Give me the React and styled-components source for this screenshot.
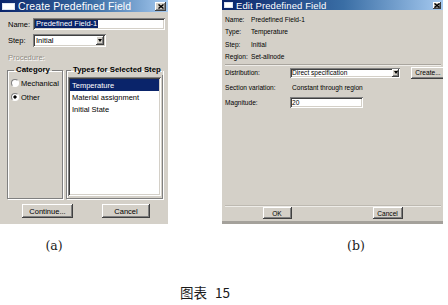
import React from 'react';
import styled, { createGlobalStyle, css } from 'styled-components';

const GlobalStyle = createGlobalStyle`
  html, body {
    margin: 0;
    padding: 0;
    background: #ffffff;
  }
  body {
    width: 448px;
    height: 305px;
    overflow: hidden;
    font-family: "Liberation Sans", Arial, sans-serif;
  }
`;

const raised = css`
  background: #d4d0c8;
  box-shadow: inset -1px -1px #404040, inset 1px 1px #ffffff, inset -2px -2px #808080;
`;

const sunken = css`
  background: #ffffff;
  box-shadow: inset 1px 1px #808080, inset -1px -1px #ffffff, inset 2px 2px #404040,
    inset -2px -2px #d4d0c8;
`;

const Page = styled.div`
  display: flex;
  flex-direction: column;
`;

const DialogRow = styled.div`
  display: flex;
  align-items: flex-start;
  gap: 54px;
`;

const Dialog = styled.div`
  width: ${(p) => p.$w}px;
  height: 224px;
  box-sizing: border-box;
  background: #d4d0c8;
  display: flex;
  flex-direction: column;
  overflow: hidden;
  color: #000;
  border-bottom: ${(p) => (p.$bar ? '3px solid #a4a19b' : 'none')};
`;

const TitleBar = styled.div`
  height: ${(p) => p.$h}px;
  flex: none;
  display: flex;
  align-items: center;
  gap: 3px;
  padding: 0 2px;
  background: linear-gradient(to right, #0a246a 0%, #3a6ea5 55%, #a6caf0 100%);
  color: #ffffff;
  font-size: ${(p) => p.$fs}px;
  white-space: nowrap;
`;

const WinIcon = styled.span`
  width: ${(p) => p.$w}px;
  height: ${(p) => p.$h}px;
  flex: none;
  background: #ffffff;
  box-shadow: inset 0 0 0 1px #dfe6f2;
`;

const TitleText = styled.span`
  flex: 1;
  letter-spacing: 0.1px;
`;

const CloseBox = styled.span`
  ${raised};
  width: ${(p) => p.$w}px;
  height: ${(p) => p.$h}px;
  flex: none;
  display: flex;
  align-items: center;
  justify-content: center;
`;

const CloseGlyph = () => (
  <svg width="6" height="5" viewBox="0 0 6 5">
    <path d="M0.5 0.5 L5.5 4.5 M5.5 0.5 L0.5 4.5" stroke="#000" strokeWidth="1.4" />
  </svg>
);

/* left dialog */

const LeftBody = styled.div`
  display: flex;
  flex-direction: column;
  padding: 0 3px 0 7px;
  font-size: 7.5px;
`;

const FieldRow = styled.div`
  display: flex;
  align-items: center;
  height: ${(p) => p.$h}px;
  margin-top: ${(p) => p.$mt}px;
`;

const FieldLabel = styled.span`
  width: 26px;
  flex: none;
  padding-left: 1px;
  box-sizing: border-box;
`;

const TextBox = styled.div`
  ${sunken};
  width: ${(p) => p.$w}px;
  height: 100%;
  box-sizing: border-box;
  display: flex;
  align-items: center;
  padding: 0 2px;
  white-space: nowrap;
`;

const Highlight = styled.span`
  background: #0a246a;
  color: #ffffff;
  padding: 0 1px;
  line-height: 8px;
`;

const Combo = styled(TextBox)`
  justify-content: space-between;
  padding: 2px 2px 2px 3px;
`;

const ArrowButton = styled.span`
  ${raised};
  width: ${(p) => p.$w || 8}px;
  height: 100%;
  flex: none;
  display: flex;
  align-items: center;
  justify-content: center;
  &::after {
    content: '';
    border-left: 2.5px solid transparent;
    border-right: 2.5px solid transparent;
    border-top: 3px solid #000;
  }
`;

const DisabledText = styled.div`
  height: 12px;
  margin-top: 4px;
  display: flex;
  align-items: center;
  padding-left: 1px;
  color: #908c84;
  text-shadow: 1px 1px 0 #ffffff;
`;

const Groups = styled.div`
  display: flex;
  gap: 3px;
  margin-top: 2px;
`;

const Group = styled.fieldset`
  width: ${(p) => p.$w}px;
  height: 134px;
  box-sizing: border-box;
  margin: 0;
  padding: ${(p) => p.$pad};
  min-width: 0;
  border: 1px solid #808080;
  box-shadow: inset 1px 1px #ffffff, 1px 1px #ffffff;
  display: flex;
  flex-direction: column;
`;

const Legend = styled.legend`
  font-weight: bold;
  font-size: 7.8px;
  line-height: 10px;
  padding: 0 2px;
  margin-left: 3px;
  white-space: nowrap;
`;

const RadioRow = styled.label`
  height: 14px;
  display: flex;
  align-items: center;
  gap: 2px;
`;

const RadioDot = styled.span`
  width: 8px;
  height: 8px;
  box-sizing: border-box;
  border-radius: 50%;
  border: 1px solid;
  border-color: #808080 #ffffff #ffffff #808080;
  background: ${(p) =>
    p.$on ? 'radial-gradient(circle, #000 0 1.4px, #fff 1.8px)' : '#ffffff'};
  flex: none;
`;

const ListBox = styled.div`
  ${sunken};
  flex: 1;
  margin-bottom: 1px;
  padding: 2px 2px;
  display: flex;
  flex-direction: column;
`;

const ListItem = styled.div`
  height: 12px;
  display: flex;
  align-items: center;
  padding-left: 2px;
  white-space: nowrap;
  background: ${(p) => (p.$sel ? '#0a246a' : 'transparent')};
  color: ${(p) => (p.$sel ? '#ffffff' : '#000')};
`;

const LeftButtons = styled.div`
  display: flex;
  gap: 29px;
  padding-left: 15px;
  margin-top: 5px;
`;

const Button = styled.span`
  ${raised};
  width: ${(p) => p.$w}px;
  height: ${(p) => p.$h}px;
  display: flex;
  align-items: center;
  justify-content: center;
  white-space: nowrap;
`;

/* right dialog */

const RightBody = styled.div`
  flex: 1;
  display: flex;
  flex-direction: column;
  font-size: 6.6px;
`;

const InfoList = styled.div`
  display: grid;
  grid-template-columns: 26px auto;
  grid-auto-rows: 12.5px;
  align-items: center;
  padding: 3px 0 0 3px;
`;

const Separator = styled.div`
  height: 1px;
  margin: ${(p) => p.$m};
  background: ${(p) => p.$c || '#a9a59e'};
  box-shadow: 0 1px 0 #eeece8;
`;

const FormGrid = styled.div`
  display: grid;
  grid-template-columns: 65px auto;
  grid-auto-rows: 15px;
  align-items: center;
  padding: 0 0 0 3px;
`;

const Inline = styled.div`
  display: flex;
  align-items: center;
  gap: 11px;
`;

const SmallCombo = styled(Combo)`
  height: 10px;
  padding: 1px 1px 1px 2px;
`;

const Value = styled.span`
  padding-left: 2px;
  white-space: nowrap;
`;

const Spacer = styled.div`
  flex: 1;
`;

const RightButtons = styled.div`
  display: flex;
  justify-content: space-around;
  margin: 1px 0 2px;
`;

/* captions */

const SubCaptions = styled.div`
  display: flex;
  gap: 194px;
  margin-top: 14px;
  font-family: "DejaVu Serif", "Liberation Serif", serif;
  font-size: 12.5px;
  line-height: 16px;
  color: #1a1a1a;
`;

const SubCaption = styled.span`
  width: 108px;
  text-align: center;
`;

const FigureCaption = styled.div`
  margin-top: 29px;
  padding-left: 180px;
  font-family: "Noto Sans CJK SC", "Noto Sans", sans-serif;
  font-size: 13.5px;
  line-height: 18px;
  word-spacing: 5px;
  color: #1a1a1a;
`;

export default function App() {
  return (
    <Page>
      <GlobalStyle />
      <DialogRow>
        <Dialog $w={168}>
          <TitleBar $h={12} $fs={10.5}>
            <WinIcon $w={13} $h={7} />
            <TitleText>Create Predefined Field</TitleText>
            <CloseBox $w={11} $h={9}>
              <CloseGlyph />
            </CloseBox>
          </TitleBar>
          <LeftBody>
            <FieldRow $mt={6} $h={12}>
              <FieldLabel>Name:</FieldLabel>
              <TextBox $w={132}>
                <Highlight>Predefined Field-1</Highlight>
              </TextBox>
            </FieldRow>
            <FieldRow $mt={4} $h={13}>
              <FieldLabel>Step:</FieldLabel>
              <Combo $w={73}>
                Initial
                <ArrowButton />
              </Combo>
            </FieldRow>
            <DisabledText>Procedure:</DisabledText>
            <Groups>
              <Group $w={56} $pad="1px 3px">
                <Legend>Category</Legend>
                <RadioRow>
                  <RadioDot />
                  Mechanical
                </RadioRow>
                <RadioRow>
                  <RadioDot $on />
                  Other
                </RadioRow>
              </Group>
              <Group $w={97} $pad="2px 1px 1px">
                <Legend>Types for Selected Step</Legend>
                <ListBox>
                  <ListItem $sel>Temperature</ListItem>
                  <ListItem>Material assignment</ListItem>
                  <ListItem>Initial State</ListItem>
                </ListBox>
              </Group>
            </Groups>
            <LeftButtons>
              <Button $w={51} $h={14}>Continue...</Button>
              <Button $w={48} $h={14}>Cancel</Button>
            </LeftButtons>
          </LeftBody>
        </Dialog>

        <Dialog $w={221} $bar>
          <TitleBar $h={10} $fs={9.5}>
            <WinIcon $w={9} $h={6} />
            <TitleText>Edit Predefined Field</TitleText>
            <CloseBox $w={8} $h={7}>
              <CloseGlyph />
            </CloseBox>
          </TitleBar>
          <RightBody>
            <InfoList>
              <span>Name:</span>
              <span>Predefined Field-1</span>
              <span>Type:</span>
              <span>Temperature</span>
              <span>Step:</span>
              <span>Initial</span>
              <span>Region:</span>
              <span>Set-allnode</span>
            </InfoList>
            <Separator $m="1px 2px 0 3px" />
            <FormGrid>
              <span>Distribution:</span>
              <Inline>
                <SmallCombo $w={110}>
                  Direct specification
                  <ArrowButton $w={7} />
                </SmallCombo>
                <Button $w={34} $h={12}>Create...</Button>
              </Inline>
              <span>Section variation:</span>
              <Value>Constant through region</Value>
              <span>Magnitude:</span>
              <TextBox $w={73} style={{ height: 11 }}>
                20
              </TextBox>
            </FormGrid>
            <Spacer />
            <Separator $m="0 2px 0 3px" $c="#bdb9b1" />
            <RightButtons>
              <Button $w={29} $h={12}>OK</Button>
              <Button $w={30} $h={12}>Cancel</Button>
            </RightButtons>
          </RightBody>
        </Dialog>
      </DialogRow>

      <SubCaptions>
        <SubCaption>(a)</SubCaption>
        <SubCaption>(b)</SubCaption>
      </SubCaptions>
      <FigureCaption>图表 15</FigureCaption>
    </Page>
  );
}
